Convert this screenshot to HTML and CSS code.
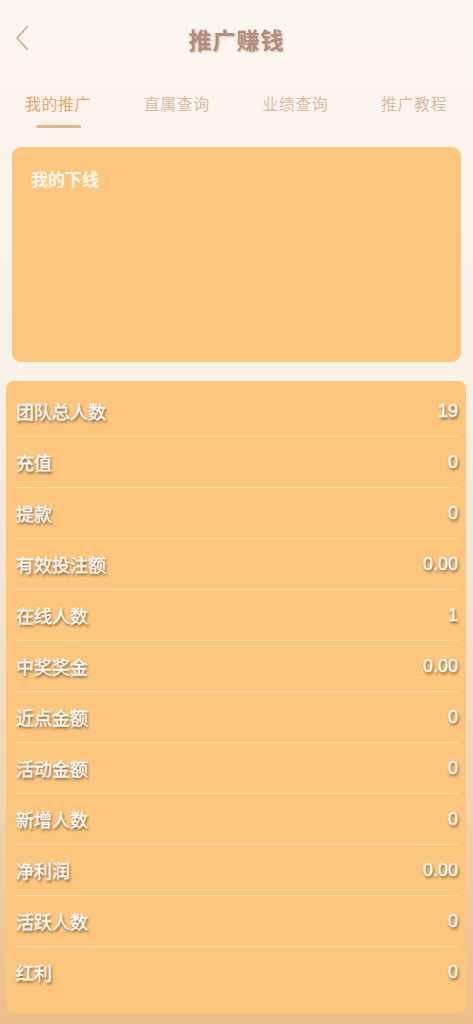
FILE: index.html
```html
<!DOCTYPE html>
<html lang="zh-CN">
    <head>
        <meta charset="UTF-8" />
        <meta name="viewport" content="width=device-width, initial-scale=1.0" />
        <title>推广赚钱</title>
        <link rel="stylesheet" href="styles.css">
    </head>
    <body>
        <div class="page">
            <div class="header">
                <span class="back">
                    <svg width="14" height="26" viewBox="0 0 14 26">
                        <path d="M12 2 L2 13 L12 24" fill="none" stroke="#d9b9a2" stroke-width="2" stroke-linecap="round" stroke-linejoin="round" />
                    </svg>
                </span>
                <h1 class="title">推广赚钱</h1>
            </div>

            <!-- Tabs -->
            <div class="tabs">
                <div class="tab active">我的推广</div>
                <div class="tab">直属查询</div>
                <div class="tab">业绩查询</div>
                <div class="tab">推广教程</div>
            </div>

            <div class="downline-card">
                <div class="card-title">我的下线</div>
            </div>

            <div class="stats-card">
                <div class="stat-row"><span>团队总人数</span><span>19</span></div>
                <div class="stat-row"><span>充值</span><span>0</span></div>
                <div class="stat-row"><span>提款</span><span>0</span></div>
                <div class="stat-row"><span>有效投注额</span><span>0.00</span></div>
                <div class="stat-row"><span>在线人数</span><span>1</span></div>
                <div class="stat-row"><span>中奖奖金</span><span>0.00</span></div>
                <div class="stat-row"><span>近点金额</span><span>0</span></div>
                <div class="stat-row"><span>活动金额</span><span>0</span></div>
                <div class="stat-row"><span>新增人数</span><span>0</span></div>
                <div class="stat-row"><span>净利润</span><span>0.00</span></div>
                <div class="stat-row"><span>活跃人数</span><span>0</span></div>
                <div class="stat-row"><span>红利</span><span>0</span></div>
            </div>
        </div>
    </body>
</html>
```

FILE: styles.css
```css
body {
    margin: 0;
    font-family: "Liberation Sans", "Noto Sans CJK SC", sans-serif;
    background: linear-gradient(
        to bottom,
        #fcf6f1 0px,
        #faf1e8 380px,
        #f3dcc0 700px,
        #ecbf88 1024px
    );
    min-height: 1024px;
}

.page {
    width: 473px;
    min-height: 1024px;
}

.header {
    position: relative;
    height: 78px;
    display: flex;
    align-items: center;
    justify-content: center;
}

.back {
    position: absolute;
    left: 15px;
    top: 25px;
}

.title {
    margin: 0;
    font-size: 23px;
    font-weight: bold;
    color: #b48c7a;
    text-shadow: 1px 1px 2px rgba(120, 80, 60, 0.35);
    letter-spacing: 1px;
}

.tabs {
    display: flex;
    justify-content: space-between;
    padding: 0 26px 0 25px;
    height: 52px;
}

.tab {
    position: relative;
    font-size: 16px;
    letter-spacing: 0.5px;
    color: #dcbba4;
    padding-top: 13px;
}

.tab.active {
    color: #eaa56c;
}

.tab.active::after {
    content: "";
    position: absolute;
    left: 11px;
    right: 10px;
    bottom: 2px;
    height: 3px;
    border-radius: 2px;
    background-color: #e4b58c;
}

.downline-card {
    margin: 17px 12px 0;
    height: 215px;
    border-radius: 9px;
    background-color: #fdc67f;
    box-sizing: border-box;
    padding: 19px 19px;
}

.card-title {
    font-size: 17px;
    font-weight: bold;
    color: #fff8ef;
}

.stats-card {
    margin: 19px 7px 0 6px;
    padding: 5px 8px 16px 10px;
    border-radius: 8px;
    background-color: #fdc67f;
}

.stat-row {
    display: flex;
    justify-content: space-between;
    align-items: center;
    height: 50px;
    border-bottom: 1px solid rgba(255, 240, 220, 0.55);
    font-size: 18px;
    color: #ffffff;
    -webkit-text-stroke: 0.3px #ffffff;
    text-shadow: 1px 2px 3px rgba(60, 35, 10, 0.8);
}

.stat-row:last-child {
    border-bottom: none;
}
```
